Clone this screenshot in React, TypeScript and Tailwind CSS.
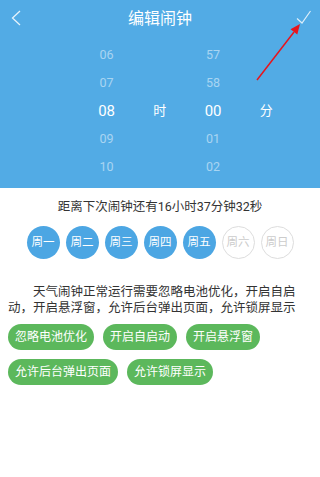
const hours = ["06", "07", "08", "09", "10"];
const minutes = ["57", "58", "00", "01", "02"];
const days = [
  { label: "周一", on: true },
  { label: "周二", on: true },
  { label: "周三", on: true },
  { label: "周四", on: true },
  { label: "周五", on: true },
  { label: "周六", on: false },
  { label: "周日", on: false },
];
const perms = [
  ["忽略电池优化", "开启自启动", "开启悬浮窗"],
  ["允许后台弹出页面", "允许锁屏显示"],
];

function Wheel({ items }: { items: string[] }) {
  return (
    <div className="flex flex-col items-center">
      {items.map((v, i) => (
        <div
          key={v}
          className={
            i === 2
              ? "h-[28px] flex items-center text-[15px] text-white"
              : "h-[28px] flex items-center text-[12.5px] text-white/50"
          }
        >
          {v}
        </div>
      ))}
    </div>
  );
}

export default function App() {
  return (
    <div
      className="relative w-[320px] h-[477px] bg-white overflow-hidden"
      style={{ fontFamily: 'Roboto, "Noto Sans CJK SC", sans-serif' }}
    >
      <div className="bg-[#52abe5]">
        <div className="h-[37px] grid grid-cols-[40px_1fr_40px] items-center">
          <svg width="40" height="37" viewBox="0 0 40 37">
            <polyline points="20,11 12.5,18 20,25" fill="none" stroke="#ffffff" strokeOpacity="0.85" strokeWidth="1.3" />
          </svg>
          <div className="text-center text-white text-[16px]">编辑闹钟</div>
          <svg width="40" height="37" viewBox="280 0 40 37">
            <polyline points="297,18.5 302,23 310.5,11" fill="none" stroke="#ffffff" strokeOpacity="0.8" strokeWidth="1.2" />
          </svg>
        </div>
        <div className="grid grid-cols-4 pl-[80px] pr-[27px] pt-[4px] pb-[7px]">
          <Wheel items={hours} />
          <div className="flex items-center justify-center text-white text-[13px]">时</div>
          <Wheel items={minutes} />
          <div className="flex items-center justify-center text-white text-[13px]">分</div>
        </div>
      </div>

      <div className="mt-[10px] text-center text-[12.5px] leading-[18px] text-[#333]">
        距离下次闹钟还有16小时37分钟32秒
      </div>

      <div className="mt-[10px] flex justify-center gap-[6px]">
        {days.map((d) => (
          <div
            key={d.label}
            className={
              d.on
                ? "w-[33px] h-[33px] rounded-full bg-[#4ca6e3] text-white text-[11.5px] flex items-center justify-center"
                : "w-[33px] h-[33px] rounded-full border border-[#dddddd] text-[#cccccc] text-[11.5px] flex items-center justify-center"
            }
          >
            {d.label}
          </div>
        ))}
      </div>

      <p className="mt-[25px] ml-[8px] w-[300px] text-[12.5px] leading-[16px] text-[#333] indent-[25px]">
        天气闹钟正常运行需要忽略电池优化，开启自启
        <br />
        动，开启悬浮窗，允许后台弹出页面，允许锁屏显示
      </p>

      <div className="mt-[8px] px-[8px] flex flex-col gap-[9px]">
        {perms.map((row, i) => (
          <div key={i} className="flex gap-[9px]">
            {row.map((p) => (
              <div
                key={p}
                className="h-[26px] px-[7px] rounded-full bg-[#5cb85c] text-white text-[12px] flex items-center"
              >
                {p}
              </div>
            ))}
          </div>
        ))}
      </div>

      <svg className="absolute left-0 top-0 pointer-events-none" width="320" height="477" viewBox="0 0 320 477">
        <line x1="257" y1="80" x2="294" y2="32" stroke="#e8141c" strokeWidth="1.5" />
        <polygon points="300,24 297.3,34.5 290.5,29.3" fill="#e8141c" />
      </svg>
    </div>
  );
}
